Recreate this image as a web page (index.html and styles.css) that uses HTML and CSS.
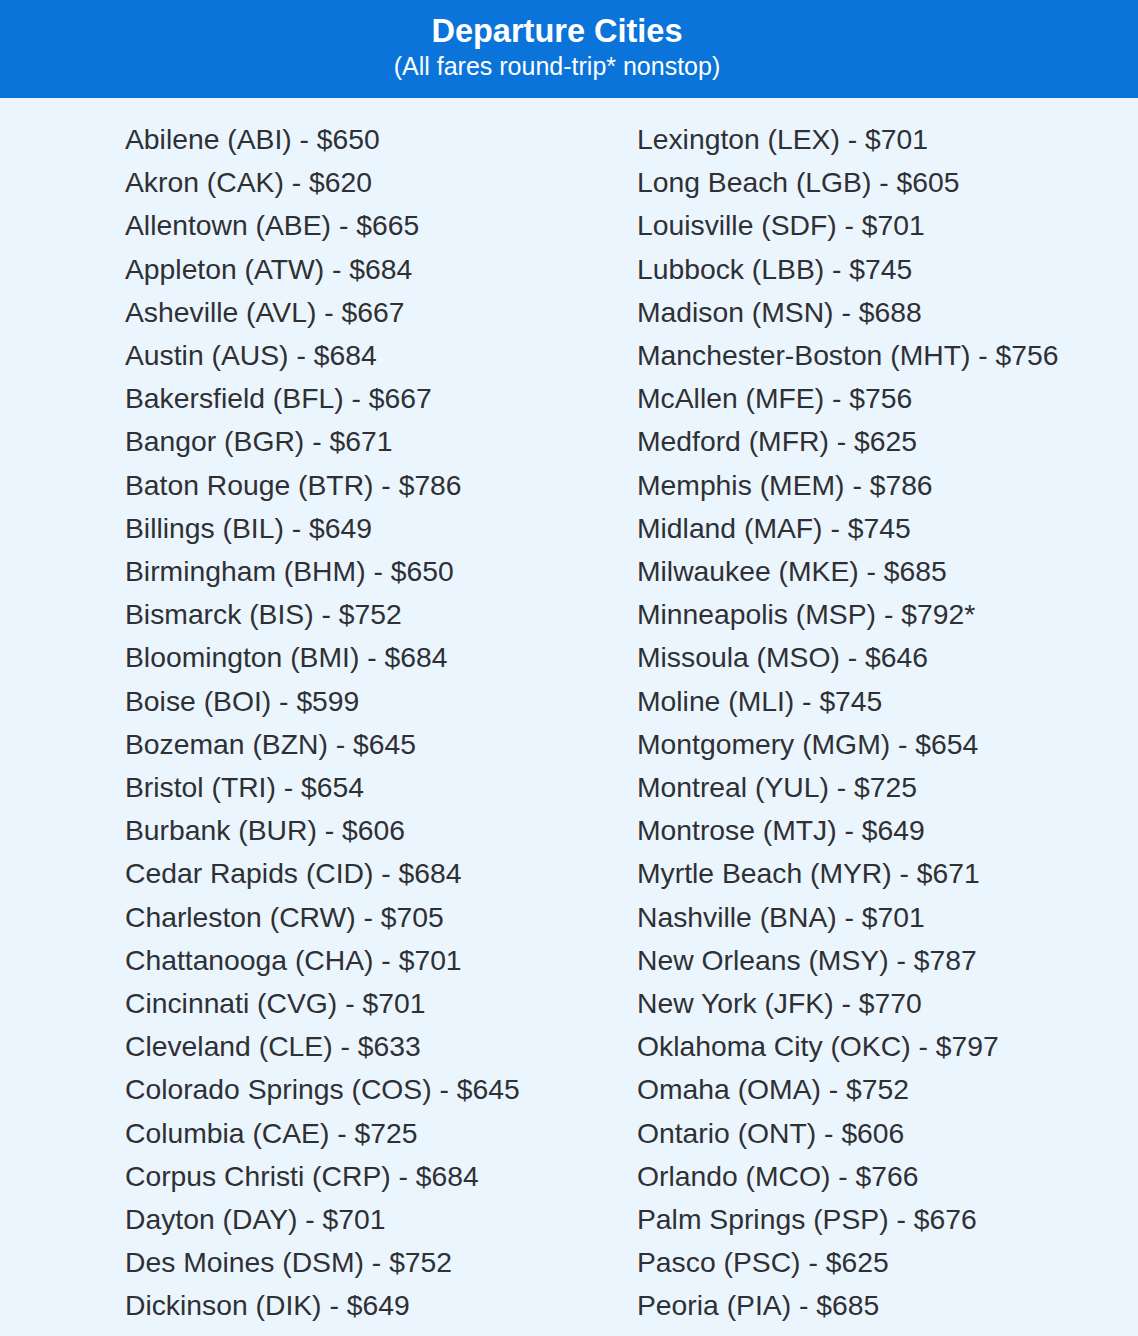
FILE: index.html
```html
<!DOCTYPE html>
<html>
<head>
<meta charset="utf-8">
<link rel="stylesheet" href="styles.css">
</head>
<body>
<header class="banner">
  <h1 class="title">Departure Cities</h1>
  <p class="subtitle">(All fares round-trip* nonstop)</p>
</header>
<main class="cities">
  <ul class="col">
    <li>Abilene (ABI) - $650</li>
    <li>Akron (CAK) - $620</li>
    <li>Allentown (ABE) - $665</li>
    <li>Appleton (ATW) - $684</li>
    <li>Asheville (AVL) - $667</li>
    <li>Austin (AUS) - $684</li>
    <li>Bakersfield (BFL) - $667</li>
    <li>Bangor (BGR) - $671</li>
    <li>Baton Rouge (BTR) - $786</li>
    <li>Billings (BIL) - $649</li>
    <li>Birmingham (BHM) - $650</li>
    <li>Bismarck (BIS) - $752</li>
    <li>Bloomington (BMI) - $684</li>
    <li>Boise (BOI) - $599</li>
    <li>Bozeman (BZN) - $645</li>
    <li>Bristol (TRI) - $654</li>
    <li>Burbank (BUR) - $606</li>
    <li>Cedar Rapids (CID) - $684</li>
    <li>Charleston (CRW) - $705</li>
    <li>Chattanooga (CHA) - $701</li>
    <li>Cincinnati (CVG) - $701</li>
    <li>Cleveland (CLE) - $633</li>
    <li>Colorado Springs (COS) - $645</li>
    <li>Columbia (CAE) - $725</li>
    <li>Corpus Christi (CRP) - $684</li>
    <li>Dayton (DAY) - $701</li>
    <li>Des Moines (DSM) - $752</li>
    <li>Dickinson (DIK) - $649</li>
  </ul>
  <ul class="col">
    <li>Lexington (LEX) - $701</li>
    <li>Long Beach (LGB) - $605</li>
    <li>Louisville (SDF) - $701</li>
    <li>Lubbock (LBB) - $745</li>
    <li>Madison (MSN) - $688</li>
    <li>Manchester-Boston (MHT) - $756</li>
    <li>McAllen (MFE) - $756</li>
    <li>Medford (MFR) - $625</li>
    <li>Memphis (MEM) - $786</li>
    <li>Midland (MAF) - $745</li>
    <li>Milwaukee (MKE) - $685</li>
    <li>Minneapolis (MSP) - $792*</li>
    <li>Missoula (MSO) - $646</li>
    <li>Moline (MLI) - $745</li>
    <li>Montgomery (MGM) - $654</li>
    <li>Montreal (YUL) - $725</li>
    <li>Montrose (MTJ) - $649</li>
    <li>Myrtle Beach (MYR) - $671</li>
    <li>Nashville (BNA) - $701</li>
    <li>New Orleans (MSY) - $787</li>
    <li>New York (JFK) - $770</li>
    <li>Oklahoma City (OKC) - $797</li>
    <li>Omaha (OMA) - $752</li>
    <li>Ontario (ONT) - $606</li>
    <li>Orlando (MCO) - $766</li>
    <li>Palm Springs (PSP) - $676</li>
    <li>Pasco (PSC) - $625</li>
    <li>Peoria (PIA) - $685</li>
  </ul>
</main>
</body>
</html>
```

FILE: styles.css
```css
html, body {
  margin: 0;
  padding: 0;
}
body {
  background: #ebf5fe;
  font-family: "Liberation Sans", Arial, sans-serif;
  color: #2f3033;
  height: 1336px;
  overflow: hidden;
}
.banner {
  background: #0a74da;
  color: #ffffff;
  text-align: center;
  height: 98px;
  box-sizing: border-box;
  padding: 13px 24px 0 0;
}
.title {
  margin: 0;
  font-size: 32.5px;
  line-height: 36px;
  font-weight: bold;
}
.subtitle {
  margin: 0;
  font-size: 25px;
  line-height: 34px;
}
.cities {
  display: grid;
  grid-template-columns: 512px 512px;
  padding: 20px 0 0 125px;
}
.col {
  list-style: none;
  margin: 0;
  padding: 0;
}
.col li {
  font-size: 28.3px;
  line-height: 43.2px;
  white-space: nowrap;
}
```
